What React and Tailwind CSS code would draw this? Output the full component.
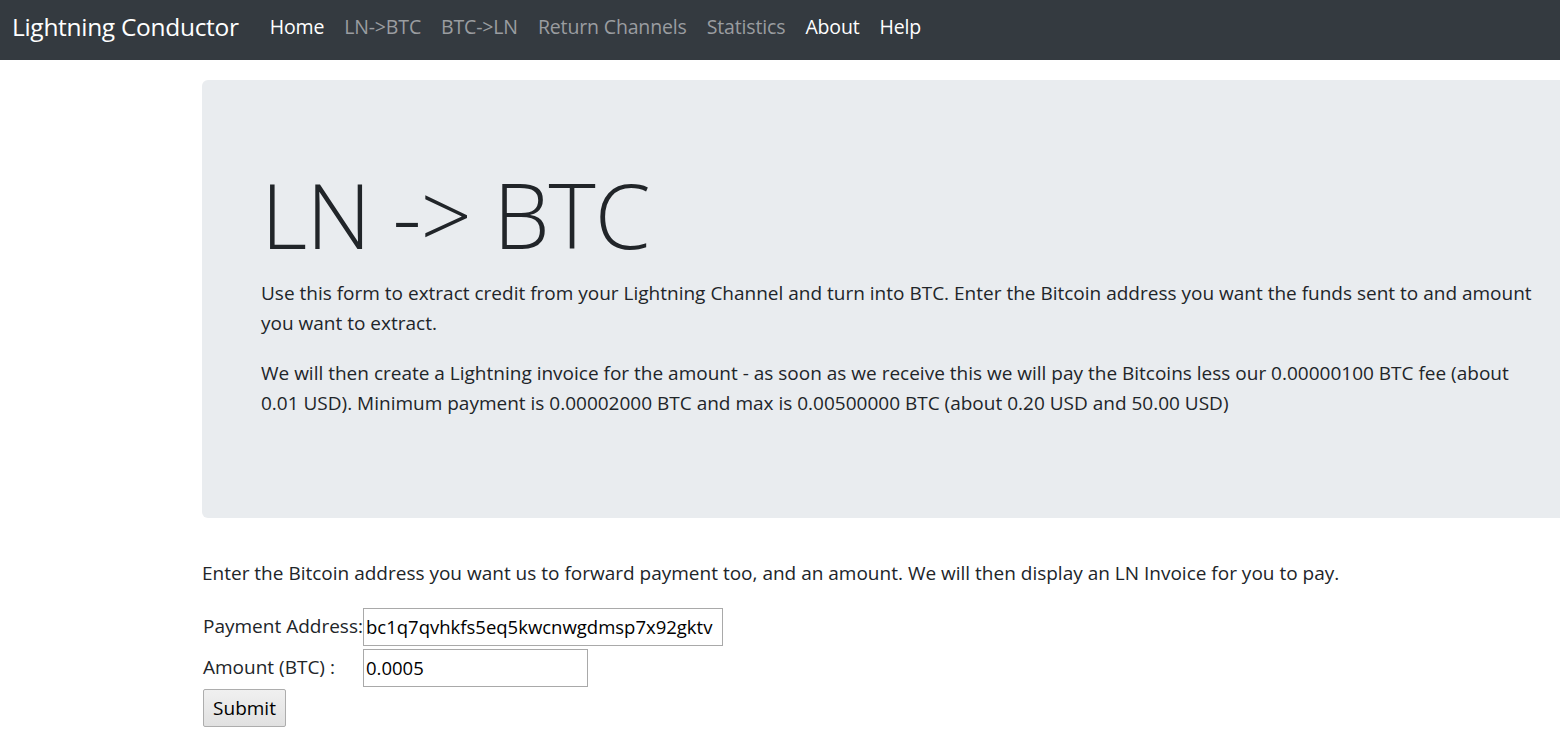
import React from 'react';

const links = [
    { label: 'Home', active: true },
    { label: 'LN->BTC', active: false },
    { label: 'BTC->LN', active: false },
    { label: 'Return Channels', active: false },
    { label: 'Statistics', active: false },
    { label: 'About', active: true },
    { label: 'Help', active: true },
];

const App = () => {
    return (
        <div className="w-[1560px] h-[744px] overflow-hidden bg-white text-[#212529] font-['Open_Sans','Noto_Sans',sans-serif]">
            {/* Navbar */}
            <nav className="h-[60px] bg-[#343a40] flex items-center pl-[12px] pb-[6px]">
                <a className="text-white text-[24.5px] leading-[36px] tracking-[-0.3px] mr-[21px]">Lightning Conductor</a>
                <ul className="flex items-center">
                    {links.map((l) => (
                        <li key={l.label}>
                            <a className={`block px-[10px] text-[19.5px] leading-[30px] tracking-[-0.15px] ${l.active ? 'text-white' : 'text-[#9a9da0]'}`}>
                                {l.label}
                            </a>
                        </li>
                    ))}
                </ul>
            </nav>

            <div className="pl-[202px] pt-[20px]">
                {/* Jumbotron */}
                <div className="w-[1420px] bg-[#e9ecef] rounded-[6px] px-[40px] py-[80px] mb-[40px]">
                    <div className="px-[19px]">
                        <h1 className="text-[90px] leading-[108px] font-light tracking-[-1px] mb-[10px]">LN -&gt; BTC</h1>
                        <p className="text-[19px] leading-[30px] mb-[20px] w-[1290px]">
                            Use this form to extract credit from your Lightning Channel and turn into BTC. Enter the Bitcoin address you want the funds sent to and amount you want to extract.
                        </p>
                        <p className="text-[19px] leading-[30px] mb-[20px] w-[1290px]">
                            We will then create a Lightning invoice for the amount - as soon as we receive this we will pay the Bitcoins less our 0.00000100 BTC fee (about 0.01 USD). Minimum payment is 0.00002000 BTC and max is 0.00500000 BTC (about 0.20 USD and 50.00 USD)
                        </p>
                    </div>
                </div>

                <p className="text-[19px] leading-[30px] mb-[19px]">
                    Enter the Bitcoin address you want us to forward payment too, and an amount. We will then display an LN Invoice for you to pay.
                </p>

                <form className="flex flex-col">
                    <div className="flex items-center h-[39px] mb-[2px]">
                        <label className="w-[161px] shrink-0 whitespace-nowrap pl-[1px] text-[19px]">Payment Address:</label>
                        <input
                            className="w-[360px] h-[38px] shrink-0 border border-[#a9a9a9] px-[2px] text-[18.5px] text-black outline-none"
                            defaultValue="bc1q7qvhkfs5eq5kwcnwgdmsp7x92gktv"
                        />
                    </div>
                    <div className="flex items-center h-[39px] mb-[2px]">
                        <label className="w-[161px] shrink-0 whitespace-nowrap pl-[1px] text-[19px]">Amount (BTC) :</label>
                        <input
                            className="w-[225px] h-[38px] shrink-0 border border-[#a9a9a9] px-[2px] text-[18.5px] text-black outline-none"
                            defaultValue="0.0005"
                        />
                    </div>
                    <div>
                        <button
                            type="button"
                            className="ml-[1px] w-[83px] h-[38px] border border-[#adadad] rounded-[2px] bg-gradient-to-b from-[#f0f0f0] to-[#e1e1e1] text-[19px] text-black"
                        >
                            Submit
                        </button>
                    </div>
                </form>
            </div>
        </div>
    );
};

export default App;
